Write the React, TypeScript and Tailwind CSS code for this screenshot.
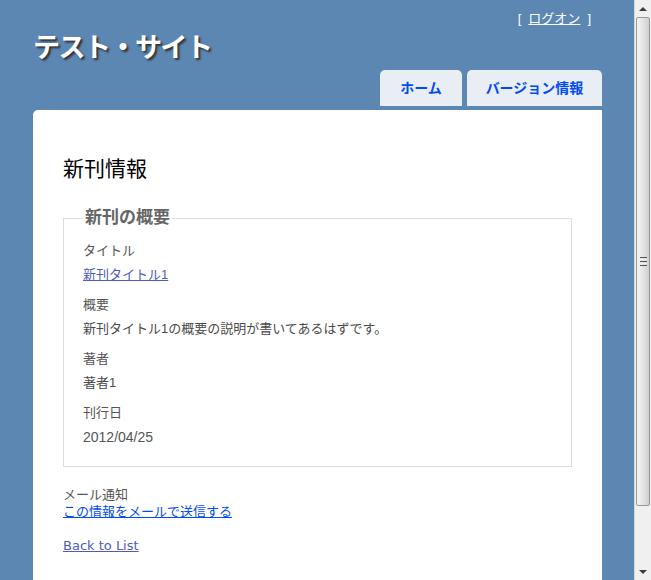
import React from 'react';

const font = "font-['Liberation_Sans','Noto_Sans_CJK_JP',sans-serif]";

const fields = [
    { label: 'タイトル', value: '新刊タイトル1', link: true },
    { label: '概要', value: '新刊タイトル1の概要の説明が書いてあるはずです。' },
    { label: '著者', value: '著者1' },
    { label: '刊行日', value: '2012/04/25', date: true },
];

const Scrollbar: React.FC = () => (
    <div className="flex w-[17px] shrink-0 flex-col border-l border-[#d6d6d6] bg-[#f0f0f0]">
        <div className="flex h-[17px] items-center justify-center">
            <div className="h-0 w-0 border-x-[4px] border-b-[4px] border-x-transparent border-b-[#3c3c3c]" />
        </div>
        <div className="mx-[1px] flex h-[489px] items-center justify-center rounded-[2px] border border-[#9a9a9a] bg-gradient-to-r from-[#f4f4f4] via-[#e4e4e4] to-[#cfcfcf]">
            <div className="flex flex-col gap-[1px]">
                <div className="h-[1px] w-[7px] bg-[#555]" />
                <div className="h-[1px] w-[7px] bg-[#eee]" />
                <div className="h-[1px] w-[7px] bg-[#555]" />
                <div className="h-[1px] w-[7px] bg-[#eee]" />
                <div className="h-[1px] w-[7px] bg-[#555]" />
            </div>
        </div>
        <div className="flex-1" />
        <div className="flex h-[17px] items-center justify-center">
            <div className="h-0 w-0 border-x-[4px] border-t-[4px] border-x-transparent border-t-[#3c3c3c]" />
        </div>
    </div>
);

export default function App() {
    return (
        <div className={`flex h-[580px] w-[651px] overflow-hidden bg-[#5c87b2] ${font}`}>
            <div className="flex w-[634px] shrink-0 flex-col pl-[33px] pr-[32px]">
                {/* header */}
                <div className="flex justify-end gap-[7px] pr-[11px] pt-[10px] text-[13px] leading-[18px] text-white">
                    <span>[</span>
                    <a href="#" className="underline">ログオン</a>
                    <span>]</span>
                </div>
                <h1 className="mt-[2px] text-[27px] font-bold leading-[36px] tracking-[-1.5px] text-white [text-shadow:2px_2px_2px_#333]">
                    テスト・サイト
                </h1>
                <div className="mt-[4px] flex justify-end gap-[5px]">
                    <div className="flex h-[36px] w-[82px] items-center justify-center rounded-t-[5px] bg-[#e8eef4] text-[14px] font-bold text-[#034af3]">
                        ホーム
                    </div>
                    <div className="flex h-[36px] w-[135px] items-center justify-center rounded-t-[5px] bg-[#e8eef4] text-[14px] font-bold text-[#034af3]">
                        バージョン情報
                    </div>
                </div>

                {/* content */}
                <div className="mt-[4px] flex-1 rounded-tl-[5px] bg-white px-[30px] pt-[45px]">
                    <h2 className="text-[21px] leading-[28px] text-black">新刊情報</h2>
                    <fieldset className="mt-[25px] border border-[#dcdcdc] pb-[17px] pl-[19px] pt-[11px]">
                        <legend className="px-[2px] text-[17px] font-bold leading-[20px] text-[#666]">新刊の概要</legend>
                        <div className="flex flex-col gap-[6px] text-[13px] leading-[24px]">
                            {fields.map((f) => (
                                <div key={f.label}>
                                    <div className="text-[#555]">{f.label}</div>
                                    {f.link ? (
                                        <a href="#" className="text-[#505abc] underline">{f.value}</a>
                                    ) : (
                                        <div className={f.date ? 'text-[14px] text-[#555]' : 'text-[#4a4a4a]'}>{f.value}</div>
                                    )}
                                </div>
                            ))}
                        </div>
                    </fieldset>
                    <div className="mt-[19px] text-[13px] leading-[17px]">
                        <div className="text-[#555]">メール通知</div>
                        <a href="#" className="text-[#034af3] underline">この情報をメールで送信する</a>
                    </div>
                    <div className="mt-[17px] text-[13px] leading-[17px]">
                        <a href="#" className="font-['DejaVu_Sans',sans-serif] text-[#505abc] underline">Back to List</a>
                    </div>
                </div>
            </div>
            <Scrollbar />
        </div>
    );
}
